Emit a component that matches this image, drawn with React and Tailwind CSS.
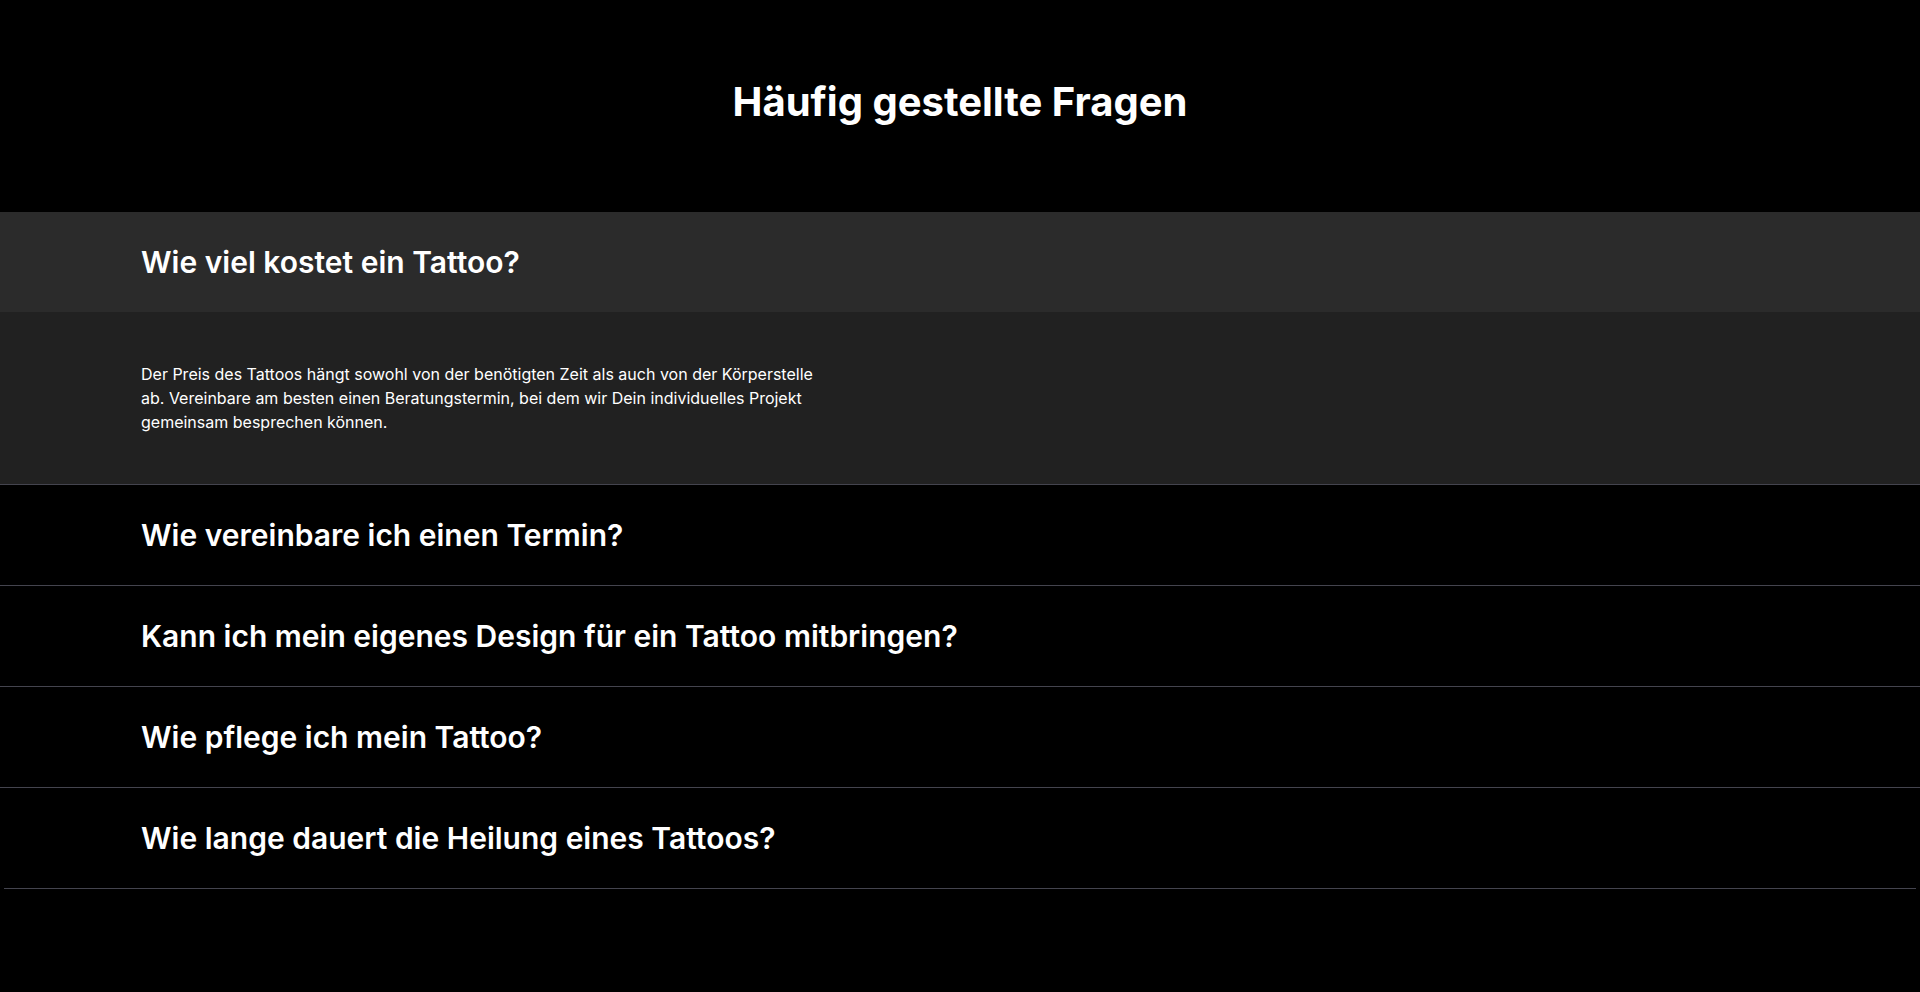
import { useState } from 'react'

const faqs = [
    {
        question: 'Wie viel kostet ein Tattoo?',
        answer: 'Der Preis des Tattoos hängt sowohl von der benötigten Zeit als auch von der Körperstelle ab. Vereinbare am besten einen Beratungstermin, bei dem wir Dein individuelles Projekt gemeinsam besprechen können.',
    },
    {
        question: 'Wie vereinbare ich einen Termin?',
        answer: 'Schreib uns einfach eine Nachricht über das Kontaktformular oder ruf uns an.',
    },
    {
        question: 'Kann ich mein eigenes Design für ein Tattoo mitbringen?',
        answer: 'Natürlich! Bring Deine Idee mit und wir passen sie gemeinsam an.',
    },
    {
        question: 'Wie pflege ich mein Tattoo?',
        answer: 'Halte die Stelle sauber, creme sie regelmäßig ein und meide direkte Sonne.',
    },
    {
        question: 'Wie lange dauert die Heilung eines Tattoos?',
        answer: 'In der Regel dauert die Heilung der Haut etwa zwei bis vier Wochen.',
    },
]

const FaqItem = ({ item, open, onToggle, last }) => (
    <div className={last ? '' : 'border-b border-[#44444e]'}>
        <button
            onClick={onToggle}
            className={`flex h-[100px] w-full items-center px-[141px] text-left text-[30px] font-semibold leading-[36px] text-white ${open ? 'bg-[#2b2b2b]' : 'bg-black'}`}
        >
            {item.question}
        </button>
        {open && (
            <div className="bg-[#212121] px-[141px] py-[50px]">
                <p className="w-[690px] text-[16px] leading-[24px] text-white">{item.answer}</p>
            </div>
        )}
    </div>
)

const App = () => {
    const [openIndex, setOpenIndex] = useState(0)

    return (
        <div className="min-h-[992px] bg-black font-['Inter',sans-serif] text-white">
            <h1 className="pt-[78px] pb-[86px] text-center text-[40px] font-bold leading-[48px]">
                Häufig gestellte Fragen
            </h1>

            <div>
                {faqs.map((item, i) => (
                    <FaqItem
                        key={item.question}
                        item={item}
                        open={openIndex === i}
                        last={i === faqs.length - 1}
                        onToggle={() => setOpenIndex(openIndex === i ? -1 : i)}
                    />
                ))}
                <div className="mx-[4px] h-px bg-[#44444e]" />
            </div>
        </div>
    )
}

export default App
